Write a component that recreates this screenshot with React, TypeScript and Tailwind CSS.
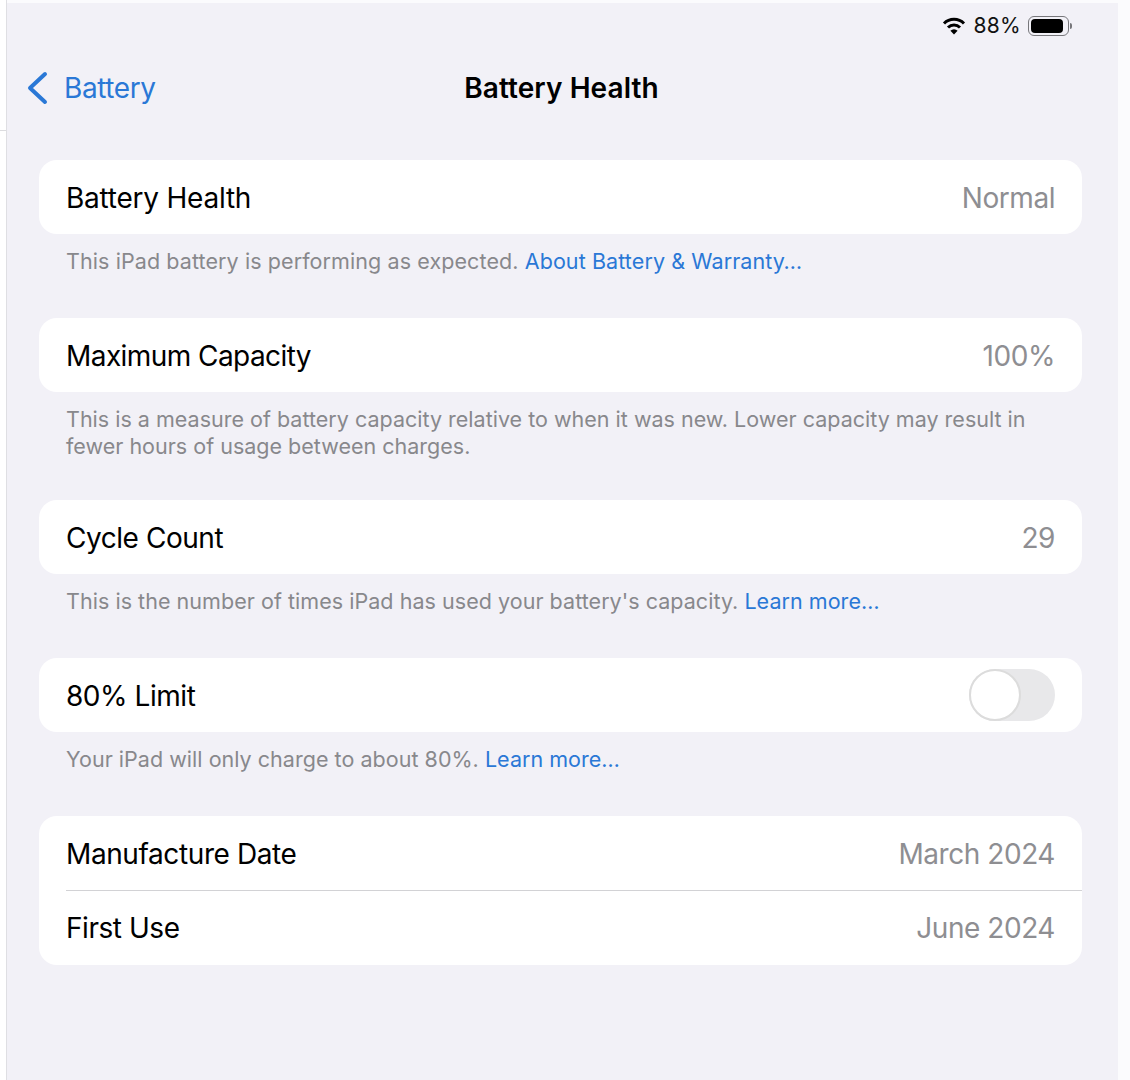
const font = { fontFamily: "Inter, 'Noto Sans', sans-serif" };

function Row({ label, value, labelClass }: { label: string; value: string; labelClass: string }) {
  return (
    <div className="flex h-[74px] items-center justify-between pl-[27px] pr-[27px] pt-[2px]">
      <span className={`text-[28px] text-black ${labelClass}`}>{label}</span>
      <span className="text-[28px] tracking-[-0.45px] text-[#8e8e92]">{value}</span>
    </div>
  );
}

function Note({ children, className }: { children: React.ReactNode; className: string }) {
  return (
    <p className={`mt-[14px] pl-[27px] pr-[40px] text-[21.5px] leading-[27px] text-[#88888c] ${className}`}>
      {children}
    </p>
  );
}

function Link({ children }: { children: React.ReactNode }) {
  return <span className="text-[#2a78d6]">{children}</span>;
}

export default function App() {
  return (
    <div style={font} className="flex h-[1080px] w-[1130px] overflow-hidden bg-[#fbfbfd]">
      <div className="h-full w-[7px] shrink-0 border-r border-r-[#dfdfe3] bg-white">
        <div className="mt-[130px] h-px bg-[#dcdcdf]" />
      </div>
      <main className="mt-[3px] h-full w-[1111px] bg-[#f2f1f7] pl-[32px]">
        <div className="flex h-[45px] items-center justify-end gap-[7px] pr-[46px] pt-[1px]">
          <svg width="24" height="18" viewBox="0 0 24 18" fill="none" stroke="#000" strokeWidth="3">
            <path d="M2 6.5a14 14 0 0 1 20 0" />
            <path d="M6 10.5a8.5 8.5 0 0 1 12 0" />
            <path d="M12 17.5l-3.6-3.8a5 5 0 0 1 7.2 0z" fill="#000" stroke="none" />
          </svg>
          <span className="text-[21px] tracking-[0.3px] text-[#111]">88%</span>
          <div className="flex items-center gap-[1px]">
            <div className="flex h-[20px] w-[41px] items-center rounded-[6px] border border-[#77777b] p-[2px]">
              <div className="h-full w-[32px] rounded-[4px] bg-black" />
            </div>
            <div className="h-[6px] w-[2px] rounded-r-full bg-[#77777b]" />
          </div>
        </div>

        <div className="relative mb-[40px] mt-[8px] flex h-[64px] items-center justify-center">
          <div className="absolute left-[-12px] flex items-center gap-[16px] text-[#2a78d6]">
            <svg width="21" height="34" viewBox="0 0 21 34" fill="none" stroke="#2a78d6" strokeWidth="4" strokeLinecap="round" strokeLinejoin="round">
              <path d="M18 3 L3 17 L18 31" />
            </svg>
            <span className="text-[28px] tracking-[-0.4px]">Battery</span>
          </div>
          <h1 className="mr-[34px] text-[28px] font-semibold tracking-[0.07px] text-black">Battery Health</h1>
        </div>

        <section className="w-[1043px] rounded-[18px] bg-white">
          <Row label="Battery Health" value="Normal" labelClass="tracking-[-0.23px]" />
        </section>
        <Note className="mb-[43px] tracking-[0.09px]">
          This iPad battery is performing as expected. <Link>About Battery &amp; Warranty…</Link>
        </Note>

        <section className="w-[1043px] rounded-[18px] bg-white">
          <Row label="Maximum Capacity" value="100%" labelClass="tracking-[-0.57px]" />
        </section>
        <Note className="mb-[40px] tracking-[0.007px]">
          This is a measure of battery capacity relative to when it was new. Lower capacity may result in fewer hours of usage between charges.
        </Note>

        <section className="w-[1043px] rounded-[18px] bg-white">
          <Row label="Cycle Count" value="29" labelClass="tracking-[-0.45px]" />
        </section>
        <Note className="mb-[43px] tracking-[0.04px]">
          This is the number of times iPad has used your battery's capacity. <Link>Learn more…</Link>
        </Note>

        <section className="flex h-[74px] w-[1043px] items-center justify-between rounded-[18px] bg-white pl-[27px] pr-[27px]">
          <span className="pt-[2px] text-[28px] tracking-[-0.45px] text-black">80% Limit</span>
          <div className="flex h-[52px] w-[86px] items-center rounded-full bg-[#e8e8ea]">
            <div className="h-[52px] w-[52px] rounded-full border-2 border-[#dcdcdc] bg-white" />
          </div>
        </section>
        <Note className="mb-[43px] tracking-[0.03px]">
          Your iPad will only charge to about 80%. <Link>Learn more…</Link>
        </Note>

        <section className="w-[1043px] rounded-[18px] bg-white">
          <Row label="Manufacture Date" value="March 2024" labelClass="tracking-[-0.4px]" />
          <div className="ml-[27px] h-px bg-[#d2d2d5]" />
          <div className="-mt-px">
            <Row label="First Use" value="June 2024" labelClass="tracking-[-0.45px]" />
          </div>
          <div className="h-px" />
        </section>
      </main>
    </div>
  );
}
